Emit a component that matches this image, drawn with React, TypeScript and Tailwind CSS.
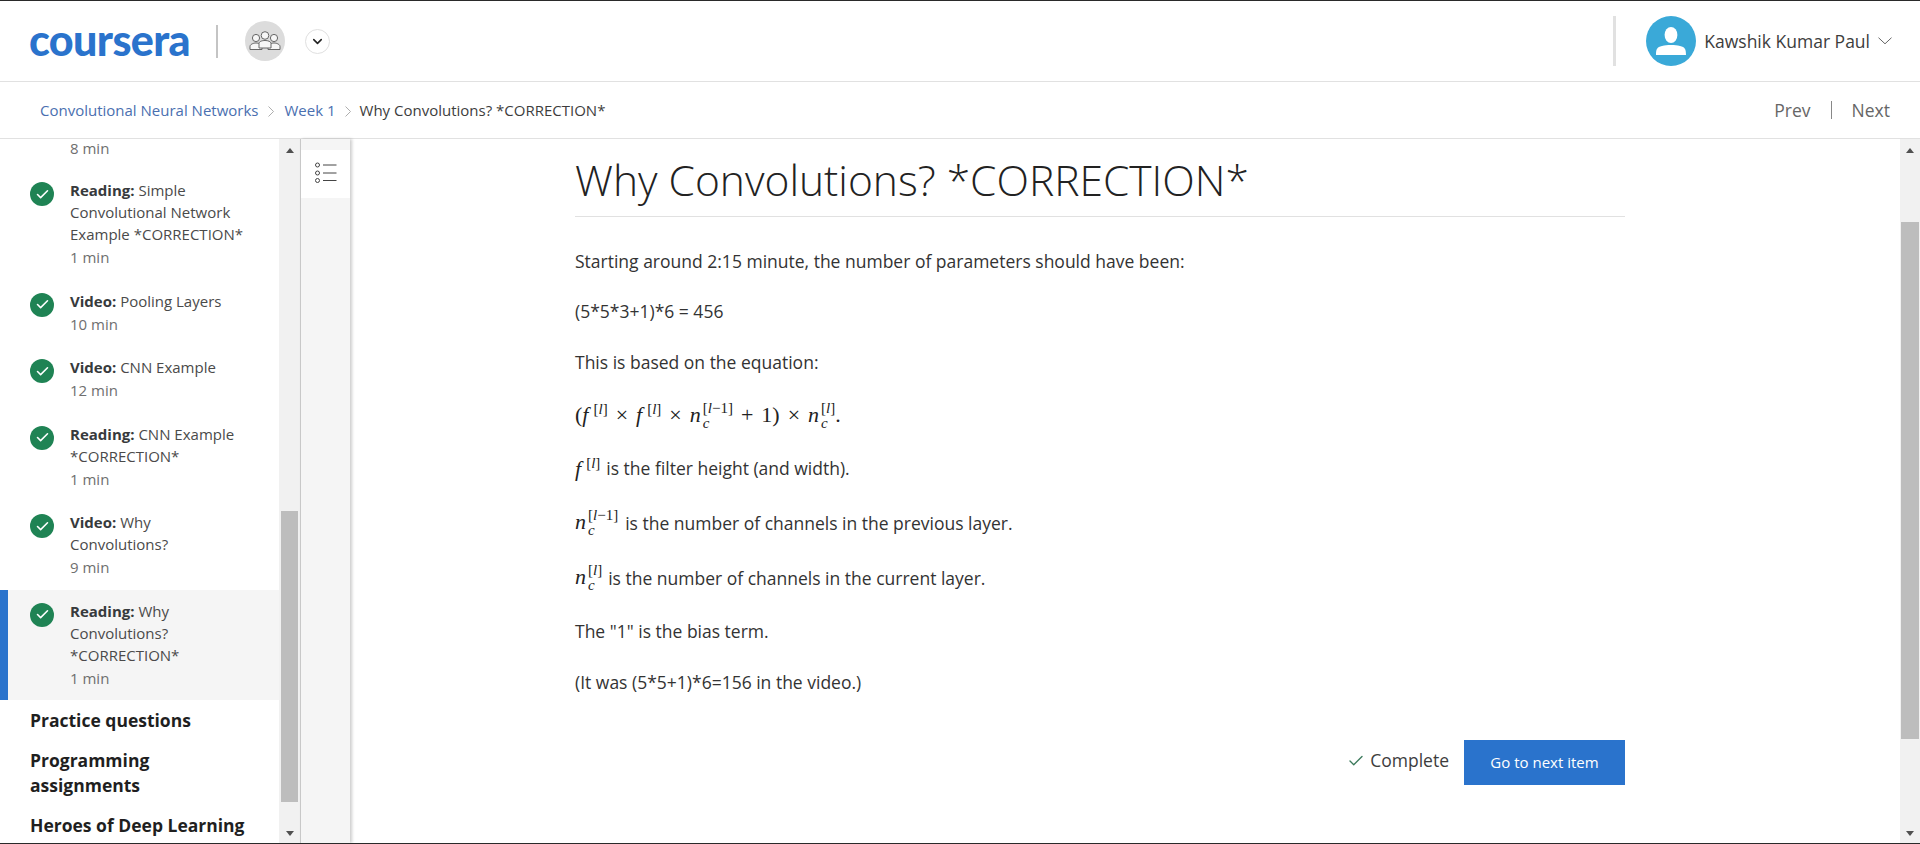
import React from "react";
import { Check, ChevronDown } from "lucide-react";

function MinLine({ t }: { t: string }) {
  return <div className="h-[24.5px] leading-[24.5px] text-[15px] text-[#6f6f6f]">{t}</div>;
}

function Item({ kind, lines, min, active }: { kind: string; lines: string[]; min: string; active?: boolean }) {
  return (
    <div className={`flex py-[10px] pl-[30px] relative ${active ? "bg-[#f5f5f5]" : ""}`}>
      {active && <div className="absolute left-0 top-0 bottom-0 w-[8px] bg-[#2a73cc]" />}
      <div className="w-[24px] h-[24px] rounded-full bg-[#1f8354] flex items-center justify-center mt-[3px] mr-[16px] shrink-0">
        <Check size={15} strokeWidth={2.5} className="text-white" />
      </div>
      <div className="text-[15px] leading-[22px] text-[#4a4a4a]">
        {lines.map((l, i) => (
          <div key={i} className="whitespace-nowrap">
            {i === 0 && <span className="font-bold text-[#373a3c]">{kind}: </span>}
            {l}
          </div>
        ))}
        <MinLine t={min} />
      </div>
    </div>
  );
}

function Scrollbar({ w, children }: { w: string; children: React.ReactNode }) {
  return (
    <div className={`${w} shrink-0 bg-[#f1f1f1] flex flex-col`}>
      <div className="h-[20px] flex items-center justify-center pt-[3px] shrink-0">
        <div className="w-0 h-0 border-x-[4px] border-x-transparent border-b-[5px] border-b-[#505050]" />
      </div>
      {children}
      <div className="mt-auto h-[20px] flex items-center justify-center shrink-0">
        <div className="w-0 h-0 border-x-[4px] border-x-transparent border-t-[5px] border-t-[#505050]" />
      </div>
    </div>
  );
}

function F() {
  return <span className="italic pr-[2px]">f</span>;
}
function L({ t }: { t: React.ReactNode }) {
  return <span className="text-[15px] align-[8px] leading-none ml-[3px]">{t}</span>;
}
function Nc({ sup }: { sup: React.ReactNode }) {
  return (
    <span className="whitespace-nowrap">
      <span className="italic">n</span>
      <span className="inline-flex flex-col align-[9px] leading-[15px] text-[15px] ml-[2px]">
        <span>{sup}</span>
        <span className="italic">c</span>
      </span>
    </span>
  );
}
const Bl = () => (
  <>
    [<span className="italic">l</span>]
  </>
);
const Blm = () => (
  <>
    [<span className="italic">l</span>−1]
  </>
);

const math = "font-['Liberation_Serif','DejaVu_Serif',serif] text-[#222] text-[22px] leading-none";

export default function App() {
  return (
    <div className="w-[1920px] h-[844px] flex flex-col overflow-hidden bg-white font-['Open_Sans',sans-serif] text-[#373a3c] border-t border-b border-[#2a2a2a]">
      <header className="h-[80px] shrink-0 flex items-center border-b border-[#e1e1e1] box-content">
        <div className="ml-[29px] w-[162px] font-['Lato',sans-serif] font-black text-[43px] leading-none tracking-[-0.6px] text-[#2a73cc] mt-[-4px]">
          coursera
        </div>
        <div className="ml-[25px] w-[2px] h-[33px] bg-[#c4c4c4]" />
        <div className="ml-[27px] w-[40px] h-[40px] rounded-full bg-[#dcdcdc] flex items-center justify-center">
          <svg width="32" height="20" viewBox="0 0 32 20" fill="#f6f6f6" stroke="#666" strokeWidth="1">
            <circle cx="7" cy="7" r="3.6" />
            <path d="M1 18.5v-3c0-2 3-3.5 6-3.5s6 1.500 6 3.500v3z" />
            <circle cx="25" cy="7" r="3.6" />
            <path d="M19 18.500v-3c0-2 3-3.500 6-3.500s6 1.500 6 3.500v3z" />
            <circle cx="16" cy="4.500" r="3.800" />
            <path d="M10 17v-4.500c0-2 3-3 6-3s6 1 6 3v4.500z" />
          </svg>
        </div>
        <div className="ml-[20px] w-[25px] h-[25px] rounded-full border border-[#e0e0e0] flex items-center justify-center">
          <ChevronDown size={15} strokeWidth={2.5} className="text-[#222]" />
        </div>
        <div className="ml-auto w-[3px] h-[50px] bg-[#e1e1e1]" />
        <div className="ml-[30px] w-[50px] h-[50px] rounded-full bg-[#3aa9d8] flex items-center justify-center">
          <svg width="30" height="40" viewBox="0 0 30 40" fill="#fff">
            <ellipse cx="15" cy="14" rx="6.4" ry="8" />
            <path d="M0 34c0-6 1-8 6-9 3-.7 5-1 9-1s6 .3 9 1c5 1 6 3 6 9z" />
          </svg>
        </div>
        <div className="ml-[8px] text-[17.5px] text-[#3d3d3d]">Kawshik Kumar Paul</div>
        <svg className="ml-[8px] mr-[28px]" width="14" height="8" viewBox="0 0 14 8" fill="none" stroke="#666" strokeWidth="1">
          <path d="M0.5 0.7 7 6.8 13.5 0.7" />
        </svg>
      </header>

      <nav className="h-[56px] shrink-0 flex items-center border-b border-[#e1e1e1] box-content text-[15px]">
        <a className="ml-[40px] text-[#4a6fb0]">Convolutional Neural Networks</a>
        <svg className="mx-[10px] mt-[2px]" width="6" height="11" viewBox="0 0 6 11" fill="none" stroke="#999" strokeWidth="0.8"><path d="M.5.5 5.5 5.5.5 10.5" /></svg>
        <a className="text-[#4a6fb0]">Week 1</a>
        <svg className="mx-[9px] mt-[2px]" width="6" height="11" viewBox="0 0 6 11" fill="none" stroke="#999" strokeWidth="0.8"><path d="M.5.5 5.5 5.5.5 10.5" /></svg>
        <span className="text-[#3d3d3d]">Why Convolutions? *CORRECTION*</span>
        <div className="ml-auto flex items-center text-[17.5px] text-[#666] mr-[30px]">
          <span>Prev</span>
          <span className="mx-[20px] w-px h-[18px] bg-[#888]" />
          <span>Next</span>
        </div>
      </nav>

      <div className="flex-1 min-h-0 flex">
        <aside className="w-[279px] shrink-0 overflow-hidden">
          <div className="pl-[70px] h-[30px] leading-[18px] text-[15px] text-[#6f6f6f]">8 min</div>
          <Item kind="Reading" lines={["Simple", "Convolutional Network", "Example *CORRECTION*"]} min="1 min" />
          <Item kind="Video" lines={["Pooling Layers"]} min="10 min" />
          <Item kind="Video" lines={["CNN Example"]} min="12 min" />
          <Item kind="Reading" lines={["CNN Example", "*CORRECTION*"]} min="1 min" />
          <Item kind="Video" lines={["Why", "Convolutions?"]} min="9 min" />
          <Item kind="Reading" lines={["Why", "Convolutions?", "*CORRECTION*"]} min="1 min" active />
          <div className="pl-[30px] text-[17.5px] font-bold leading-[25px] text-[#1f1f1f]">
            <div className="mt-[7.5px]">Practice questions</div>
            <div className="mt-[15px]">
              Programming
              <br />
              assignments
            </div>
            <div className="mt-[15px] whitespace-nowrap">Heroes of Deep Learning</div>
          </div>
        </aside>

        <Scrollbar w="w-[21px]">
          <div className="mt-[352px] mx-[2px] h-[291px] bg-[#bdbdbd]" />
        </Scrollbar>

        <div className="w-[50px] shrink-0 bg-[#f5f5f5] border-l border-[#c8c8c8] shadow-[2px_0_3px_rgba(0,0,0,0.2)] z-10 pt-[11px]">
          <div className="h-[48px] bg-white flex items-center justify-center pb-[3px]">
            <svg width="22" height="22" viewBox="0 0 22 22" fill="none" stroke="#444" strokeWidth="1">
              <circle cx="2.5" cy="3" r="2" />
              <circle cx="2.5" cy="11" r="2" />
              <circle cx="2.5" cy="18.5" r="2" />
              <path d="M8 3h13.5M8 11h13.5M8 18.5h13.5" />
            </svg>
          </div>
        </div>

        <main className="flex-1 min-w-0 pl-[225px] pr-[275px] overflow-hidden">
          <h1 className="mt-[7px] h-[70px] leading-[68px] text-[42.5px] font-light text-[#222] border-b border-[#e1e1e1] box-content">
            Why Convolutions? *CORRECTION*
          </h1>
          <div className="text-[17.5px] leading-[24px] text-[#333]">
            <p className="mt-[32px]">Starting around 2:15 minute, the number of parameters should have been:</p>
            <p className="mt-[26px]">(5*5*3+1)*6 = 456</p>
            <p className="mt-[27px]">This is based on the equation:</p>
            <p className={`mt-[30px] h-[24px] flex items-center ${math}`}>
              <span className="whitespace-pre">
                (<F />
                <L t={<Bl />} />
                <span className="mx-[8px]">×</span>
                <F />
                <L t={<Bl />} />
                <span className="mx-[8px]">×</span>
                <Nc sup={<Blm />} />
                <span className="mx-[8px]">+</span>1)
                <span className="mx-[8px]">×</span>
                <Nc sup={<Bl />} />.
              </span>
            </p>
            <p className="mt-[28px] flex items-center h-[24px]">
              <span className={`${math} mr-[6px]`}>
                <F />
                <L t={<Bl />} />
              </span>
              is the filter height (and width).
            </p>
            <p className="mt-[31px] flex items-center h-[24px]">
              <span className={`${math} mr-[7px]`}>
                <Nc sup={<Blm />} />
              </span>
              is the number of channels in the previous layer.
            </p>
            <p className="mt-[31px] flex items-center h-[24px]">
              <span className={`${math} mr-[6px]`}>
                <Nc sup={<Bl />} />
              </span>
              is the number of channels in the current layer.
            </p>
            <p className="mt-[29px]">The "1" is the bias term.</p>
            <p className="mt-[27px]">(It was (5*5+1)*6=156 in the video.)</p>
          </div>
          <div className="mt-[46px] flex justify-end items-center">
            <Check size={18} strokeWidth={1.8} className="text-[#3c7a5c] mr-[5px] mt-[-4px]" />
            <span className="text-[17.5px] text-[#3d3d3d] mr-[15px] mt-[-4px]">Complete</span>
            <button className="w-[161px] h-[45px] bg-[#2a73cc] text-white text-[15px] font-normal">Go to next item</button>
          </div>
        </main>

        <Scrollbar w="w-[20px]">
          <div className="mt-[63px] mx-[1px] h-[517px] bg-[#bdbdbd]" />
        </Scrollbar>
      </div>
    </div>
  );
}
